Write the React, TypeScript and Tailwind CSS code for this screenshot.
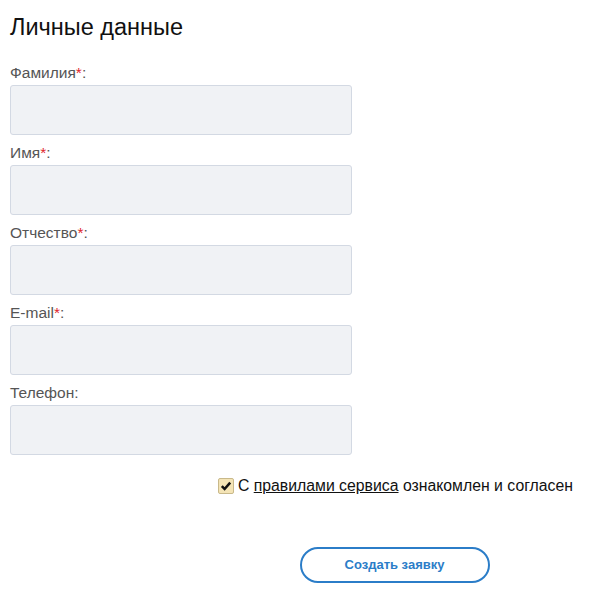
import React, { useState } from 'react';

const fields = [
    { label: 'Фамилия', required: true },
    { label: 'Имя', required: true },
    { label: 'Отчество', required: true },
    { label: 'E-mail', required: true },
    { label: 'Телефон', required: false },
];

const App: React.FC = () => {
    const [agreed, setAgreed] = useState(true);

    return (
        <div className="w-[610px] h-[590px] bg-white px-[10px] pt-[14px] font-['Liberation_Sans',Arial,sans-serif]">
            <h2 className="text-[23.5px] leading-[26px] text-[#111]">Личные данные</h2>
            <div className="mt-[24px] w-[342px]">
                {fields.map((f) => (
                    <div key={f.label} className="mb-[9px]">
                        <label className="block text-[15.5px] leading-[18px] text-[#555]">
                            {f.label}
                            {f.required && <span className="text-[#e0262b]">*</span>}:
                        </label>
                        <input
                            type="text"
                            className="mt-[3px] block w-full h-[50px] rounded-[3px] border border-[#d3d9e3] bg-[#f0f2f5] px-3 outline-none"
                        />
                    </div>
                ))}
            </div>
            <div className="flex justify-end pr-[27px] mt-[22px]">
                <label className="flex items-center gap-[4px] text-[15.8px] leading-[18px] text-[#111] cursor-pointer">
                    <span
                        onClick={() => setAgreed(!agreed)}
                        className="w-[16px] h-[16px] rounded-[2px] border border-[#c9b98a] bg-[#f4e4b6] flex items-center justify-center"
                    >
                        {agreed && (
                            <svg width="12" height="12" viewBox="0 0 12 12">
                                <path d="M1.8 6.2 L4.6 9 L10.2 2.6" fill="none" stroke="#111" strokeWidth="2.5" />
                            </svg>
                        )}
                    </span>
                    <span>
                        С <a className="underline text-[#111]">правилами сервиса</a> ознакомлен и согласен
                    </span>
                </label>
            </div>
            <div className="flex justify-center pl-[179px] mt-[52px]">
                <button className="w-[190px] h-[36px] rounded-full border-2 border-[#2b7dc8] text-[#2b7dc8] text-[13px] font-bold">
                    Создать заявку
                </button>
            </div>
        </div>
    );
};

export default App;
